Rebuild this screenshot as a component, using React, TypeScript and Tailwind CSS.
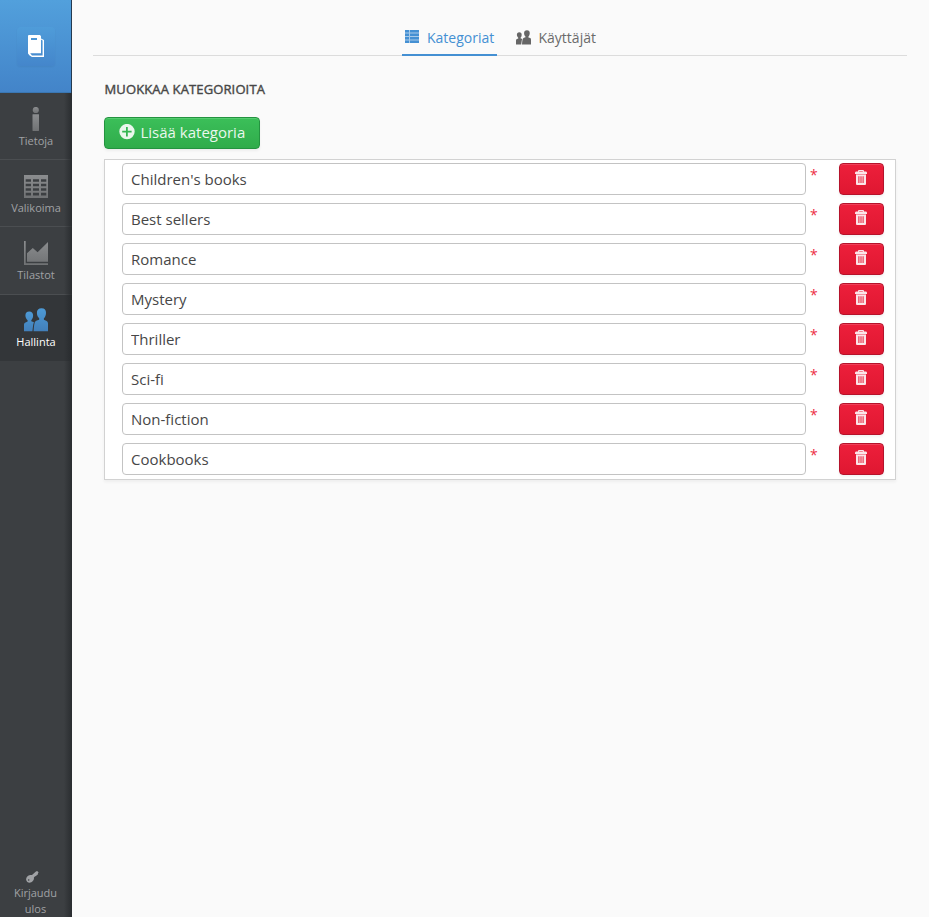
import React, { useState } from "react";

type IconProps = { className?: string };

const BookIcon = () => (
  <svg className="block h-[22px] w-4" viewBox="0 0 16 22" fill="#fff">
    <path
      fillRule="evenodd"
      d="M1 0H12L13 1.3V3.4L16 5V22H4L1.6 20.4L0 18.5V1Q0 0 1 0ZM3 3V5H9V3ZM13 4.6V18.2H2.2L4 20.4H14.6V5.6Z"
    />
  </svg>
);

const InfoIcon = () => (
  <svg className="block size-6" viewBox="0 0 24 24" fill="url(#grey)">
    <circle cx="11.8" cy="3" r="3.1" />
    <rect x="8.5" y="7.2" width="6.5" height="16.8" rx=".4" />
  </svg>
);

const TableIcon = () => (
  <svg className="block size-6" viewBox="0 0 24 24" fill="url(#grey)">
    <path
      fillRule="evenodd"
      d="M0 1H24V24H0ZM1.7 5.3V7.8H7V5.3ZM9 5.3V7.8H15V5.3ZM17 5.3V7.8H22.3V5.3ZM1.7 9.8V12.3H7V9.8ZM9 9.8V12.3H15V9.8ZM17 9.8V12.3H22.3V9.8ZM1.7 14.3V16.8H7V14.3ZM9 14.3V16.8H15V14.3ZM17 14.3V16.8H22.3V14.3ZM1.7 18.8V21.6H7V18.8ZM9 18.8V21.6H15V18.8ZM17 18.8V21.6H22.3V18.8Z"
    />
  </svg>
);

const ChartIcon = () => (
  <svg className="block size-6" viewBox="0 0 24 24" fill="url(#grey)">
    <path d="M0 0H1.7V22.3H24V24H0ZM3 12.2L8.8 7L13.6 11.2L24 1V20.8H3Z" />
  </svg>
);

const UsersIcon = ({ className }: IconProps) => (
  <svg className={className} viewBox="0 0 24 24">
    <path d="M5.2 3.6C7.9 3.6 9.2 5.2 9.1 7.8C9 9.8 8.3 11.3 7.3 12.2V13.3L9.9 14.3C8.9 17 8.9 20 8.4 23.3H0V16.6Q0 15 1.5 14.5L3.6 13.4V12.2C2.2 11 1.4 9.4 1.4 7.6C1.4 5.1 2.8 3.6 5.2 3.6Z" />
    <path d="M17.5 .2C20.7 .2 22.1 2.2 22 5C21.9 7.6 21 9.3 19.9 10.3V11.8L22.6 12.9Q24 13.6 24 15.4V23.3H9.6C9.9 19.6 10 16.7 10.8 14.3Q11.3 13 12.8 12.5L15.2 11.7V10.3C13.9 9.2 13 7.5 12.9 5C12.8 1.9 14.6 .2 17.5 .2Z" />
  </svg>
);

const KeyIcon = () => (
  <svg className="ml-[26px] block h-3 w-[13px]" viewBox="0 0 13 12" fill="#a0a2a5">
    <path
      fillRule="evenodd"
      d="M11.6 .2L12.6 1.6L11.9 2.5L12 3.6L10.6 3.9L10.4 5.1L9.1 5.3L7.9 6.5C8.3 8.5 7.1 10.4 5.3 11.3C3.1 12.2 .6 11.3 .2 9.1C-.3 6.7 1.6 4.2 4.2 4L6 4L10.2 .2ZM2.7 8.2A.8 .8 0 1 0 2.7 9.8A.8 .8 0 1 0 2.7 8.2Z"
    />
  </svg>
);

const ListIcon = () => (
  <svg className="block h-[13px] w-[14px]" viewBox="0 0 14 13" fill="#4490d3">
    <path opacity=".45" d="M0 0H14V13H0Z" />
    <path d="M0 0H4V2.6H0ZM5 0H14V2.6H5ZM0 3.5H4V6H0ZM5 3.5H14V6H5ZM0 7H4V9.5H0ZM5 7H14V9.5H5ZM0 10.4H4V13H0ZM5 10.4H14V13H5Z" />
  </svg>
);

const PlusIcon = () => (
  <svg className="block size-4" viewBox="0 0 16 16" fill="#eaf7ed">
    <path
      fillRule="evenodd"
      d="M8 -.1A7.7 7.7 0 1 1 8 15.3A7.7 7.7 0 1 1 8 -.1ZM7 3V6.8H3.2V8.6H7V12.4H8.8V8.6H12.6V6.8H8.8V3Z"
    />
  </svg>
);

const TrashIcon = () => (
  <svg className="mr-px block h-[15px] w-3" viewBox="0 0 12 15" fill="#fbe6e9">
    <path
      fillRule="evenodd"
      d="M4 0H8Q9 0 9 1V1.6H11Q12 1.8 12 3V4H0V3Q0 1.8 1 1.6H3V1Q3 0 4 0ZM4.2 1V1.6H7.8V1ZM1 5H11V14Q11 15 10 15H2Q1 15 1 14ZM3.4 6.2V13H4.4V6.2ZM5.5 6.2V13H6.5V6.2ZM7.6 6.2V13H8.6V6.2Z"
    />
    <path opacity=".6" d="M1 4H11V5H1Z" />
  </svg>
);

const menu = [
  { label: "Tietoja", icon: <InfoIcon />, size: "h-[67px] border-b pt-[14px]" },
  { label: "Valikoima", icon: <TableIcon />, size: "h-[67px] border-b pt-[14px]" },
  { label: "Tilastot", icon: <ChartIcon />, size: "h-[68px] border-b pt-[14px]" },
  {
    label: "Hallinta",
    icon: <UsersIcon className="block size-6 fill-[url(#blue)]" />,
    size: "h-[66px] pt-[13px]",
    active: true,
  },
];

const initial = [
  "Children's books",
  "Best sellers",
  "Romance",
  "Mystery",
  "Thriller",
  "Sci-fi",
  "Non-fiction",
  "Cookbooks",
];

export default function App() {
  const [names, setNames] = useState(initial);

  return (
    <div className="flex h-[917px] w-[929px] overflow-hidden bg-[#fafafa] font-['Open_Sans',sans-serif] text-[15px] text-[#474747]">
      <svg className="absolute size-0">
        <defs>
          <linearGradient id="grey" x1="0" y1="0" x2="0" y2="1">
            <stop offset="0" stopColor="#8b8d8f" />
            <stop offset="1" stopColor="#707274" />
          </linearGradient>
          <linearGradient id="blue" x1="0" y1="0" x2="0" y2="1">
            <stop offset="0" stopColor="#4d9ad6" />
            <stop offset="1" stopColor="#427fb9" />
          </linearGradient>
        </defs>
      </svg>

      <aside className="relative flex w-[72px] shrink-0 flex-col bg-[#3c3f42]">
        <div className="flex h-[93px] w-[71px] items-center justify-center border-b border-[#3a77b3] bg-linear-to-b from-[#52a0dc] to-[#4384c9] pl-px">
          <div className="flex h-[39px] w-[38px] items-center justify-center rounded bg-linear-to-b from-[#4f9cd9] to-[#4486cb] shadow-[0_1px_2px_rgba(0,0,0,0.05)]">
            <BookIcon />
          </div>
        </div>
        <nav className="flex flex-col">
          {menu.map((m) => (
            <a
              key={m.label}
              className={`flex w-full flex-col items-center border-[#4b4e51] text-[11px] leading-4 ${m.size} ${
                m.active ? "bg-[#333639] text-white" : "text-[#a0a2a5]"
              }`}
            >
              {m.icon}
              <span className="mt-[2px]">{m.label}</span>
            </a>
          ))}
        </nav>
        <div className="mt-auto pr-px text-center text-[11px] leading-4 text-[#a0a2a5]">
          <KeyIcon />
          <div className="mt-[2px]">
            Kirjaudu
            <br />
            ulos
          </div>
        </div>
        <div className="pointer-events-none absolute bottom-0 right-0 top-[93px] w-2 bg-linear-to-r from-transparent to-[#25282b]/80" />
        <div className="pointer-events-none absolute right-0 top-0 h-[93px] w-px bg-[#243a50]" />
      </aside>

      <main className="min-w-0 flex-1">
        <div className="ml-[21px] mr-[22px] flex h-14 items-end justify-center border-b border-[#dcdcdc] pr-px">
          <div className="-mb-px flex h-9 w-[95px] border-b-2 border-[#4490d3] pl-[3px] text-[14px] leading-[20px] text-[#4490d3]">
            <span className="mt-[10px]">
              <ListIcon />
            </span>
            <span className="ml-2 mt-2">Kategoriat</span>
          </div>
          <div className="-mb-px ml-[19px] flex h-9 w-[81px] text-[14px] leading-[20px] text-[#6b6b6b]">
            <UsersIcon className="mt-[10px] block size-[15px] shrink-0 fill-[#666]" />
            <span className="ml-[7.5px] mt-2">Käyttäjät</span>
          </div>
        </div>

        <div className="ml-8 mr-[33px]">
          <h2 className="pl-[0.5px] pt-6 text-[13px] leading-[19px] tracking-[0.13px] [-webkit-text-stroke:0.4px_#474747]">
            MUOKKAA KATEGORIOITA
          </h2>
          <button
            className="mt-[18px] flex h-8 w-[156px] rounded-[4px] border border-[#249340] bg-linear-to-b from-[#3bbf59] to-[#30ac4b] pl-[14px] pt-[6px] text-[15px] leading-[16px] text-[#eaf7ed] shadow-[inset_0_1px_0_#55cc70,0_2px_3px_rgba(0,0,0,0.05)]"
            onClick={() => setNames([...names, ""])}
          >
            <PlusIcon />
            <span className="ml-[5.5px]">Lisää kategoria</span>
          </button>

          <div className="mt-[10px] flex h-[321px] flex-col gap-2 border border-[#d2d2d2] bg-white pl-[17px] pt-[3px] shadow-[0_2px_3px_rgba(0,0,0,0.05)]">
            {names.map((name, i) => (
              <div key={i} className="flex h-8 shrink-0">
                <input
                  className="h-8 w-[684px] rounded-[4px] border border-[#c3c3c3] bg-white px-2 text-[15px] outline-none"
                  value={name}
                  onChange={(e) => setNames(names.map((n, j) => (j === i ? e.target.value : n)))}
                />
                <span className="ml-[4px] w-[29px] text-[14px] leading-[23px] text-[#ed2f45]">*</span>
                <button
                  className="flex h-8 w-[45px] justify-center rounded-[4px] border border-[#b5132b] bg-linear-to-b from-[#ed1f3b] to-[#df1731] pt-[6px] shadow-[inset_0_1px_0_#f04059,0_2px_3px_rgba(0,0,0,0.05)]"
                  onClick={() => setNames(names.filter((_, j) => j !== i))}
                >
                  <TrashIcon />
                </button>
              </div>
            ))}
          </div>
        </div>
      </main>
    </div>
  );
}
